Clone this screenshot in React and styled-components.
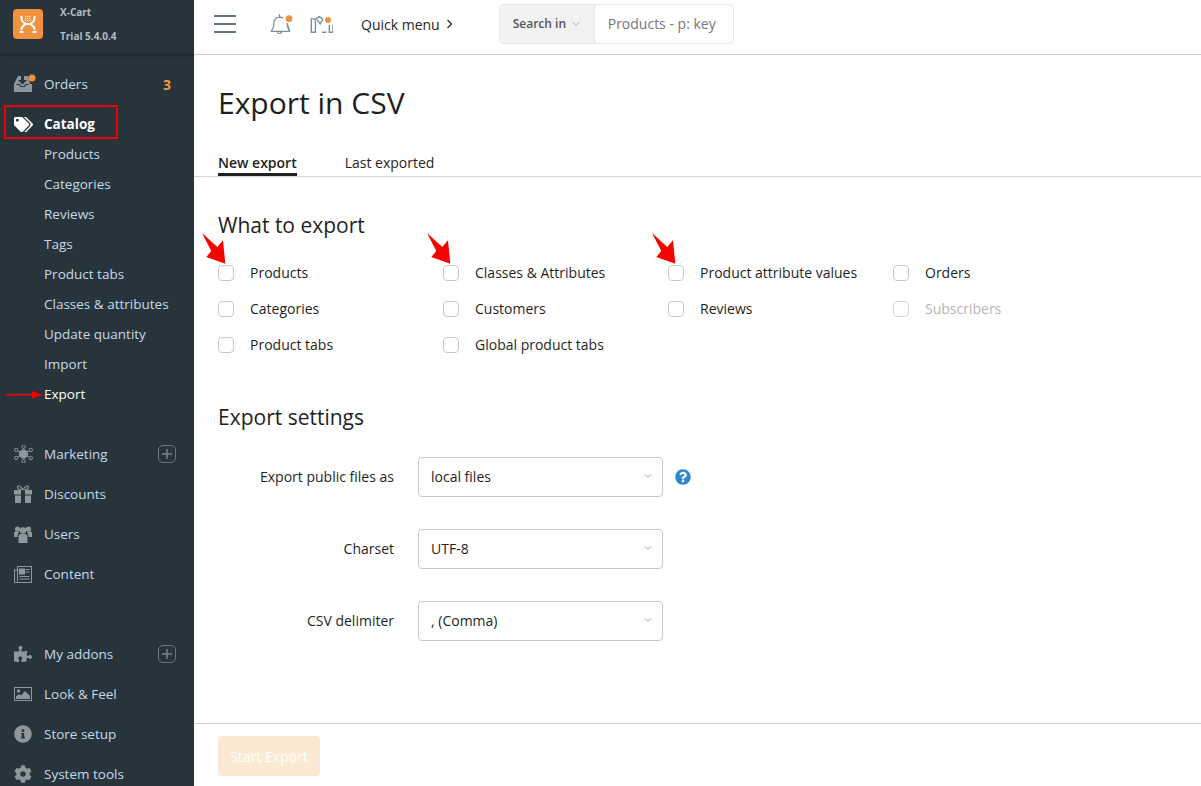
import React from 'react';
import styled, { createGlobalStyle } from 'styled-components';
import { FaTags, FaPuzzlePiece, FaInfoCircle, FaCog, FaQuestionCircle } from 'react-icons/fa';

const Global = createGlobalStyle`
  html, body { margin: 0; padding: 0; height: 100%; background: #fff; overflow: hidden; }
  body { font-family: "Open Sans", "Liberation Sans", sans-serif; font-size: 14px; color: #1f1f1f; }
  * { box-sizing: border-box; }
`;

const Page = styled.div`
  display: flex; width: 1201px; height: 786px; overflow: hidden;
`;
const Sidebar = styled.aside`
  width: 194px; flex: none; height: 786px; background: #28343b; overflow: hidden;
  display: flex; flex-direction: column; color: #c5d9ea; font-size: 13.5px;
`;
const Brand = styled.div`
  height: 54px; flex: none; display: flex; padding: 9px 0 0 13px; gap: 17px;
  box-shadow: 0 1px 3px rgba(0,0,0,.35); background: #28343b;
`;
const BrandText = styled.div`
  font-size: 10px; font-weight: 700; color: #b4bdc3; line-height: 24px; margin-top: -9px;
`;
const BrandLine = styled.div`
  height: 24px;
`;
const Nav = styled.nav`
  padding-top: 10px; display: flex; flex-direction: column;
`;
const Group = styled.div`
  display: flex; flex-direction: column; margin-bottom: ${p => p.$gap || 0}px;
`;
const SubGroup = styled.div`
  display: flex; flex-direction: column; margin-top: -5px; margin-bottom: 25px;
`;
const Item = styled.div`
  position: relative; display: flex; align-items: center; height: 40px; padding-left: 14px;
  color: ${p => p.$active ? '#fff' : '#c5d9ea'}; font-weight: ${p => p.$active ? 700 : 400};
`;
const IconSlot = styled.span`
  width: 30px; flex: none; display: flex; align-items: center; color: ${p => p.$active ? '#fff' : '#8d979d'};
`;
const Count = styled.span`
  position: absolute; left: 163px; color: #f0983a; font-weight: 700; font-size: 14px;
`;
const Plus = styled.span`
  position: absolute; left: 158px; top: 11px; width: 18px; height: 18px;
  border: 1px solid #6c777d; border-radius: 5px; color: #79848a;
  display: flex; align-items: center; justify-content: center;
`;
const RedBox = styled.span`
  position: absolute; left: 4px; top: 1px; width: 114px; height: 34px; border: 2px solid #ee0000;
`;
const SubItem = styled.div`
  position: relative; height: 30px; padding-left: 44px; display: flex; align-items: center;
  color: ${p => p.$active ? '#fff' : '#c5d9ea'};
`;
const NavArrow = styled.svg`
  position: absolute; left: 5px; top: 12px;
`;
const Main = styled.main`
  flex: 1; min-width: 0; display: flex; flex-direction: column; height: 786px;
`;
const Header = styled.header`
  height: 55px; flex: none; border-bottom: 1px solid #c9c9c9; display: flex; align-items: center; padding: 0 0 6px 20px;
`;
const Burger = styled.div`
  width: 22px; height: 18px; display: flex; flex-direction: column; justify-content: space-between; margin-right: 34px;
`;
const BurgerLine = styled.i`
  display: block; height: 2px; background: #5f7682;
`;
const HeadIcon = styled.span`
  display: flex; width: 24px; margin-right: ${p => p.$mr}px;
`;
const Quick = styled.div`
  display: flex; align-items: center; gap: 6px; color: #1f1f1f; margin-right: 46px;
`;
const Search = styled.div`
  display: flex; height: 40px; width: 235px; border: 1px solid #e8e8e8; border-radius: 4px; overflow: hidden;
`;
const SearchIn = styled.div`
  width: 95px; background: #f2f2f2; border-right: 1px solid #e6e6e6; display: flex; align-items: center;
  padding: 0 0 1px 13px; gap: 6px; font-size: 12px; font-weight: 600; color: #555;
`;
const SearchInput = styled.div`
  flex: 1; display: flex; align-items: center; padding: 0 0 2px 13px; color: #777; font-size: 14px;
`;
const Title = styled.h1`
  margin: 0; font-size: 30px; font-weight: 400; line-height: 44px; padding: 26px 0 0 24px; color: #1f1f1f;
`;
const Tabs = styled.div`
  display: flex; gap: 48px; padding: 28px 0 0 24px; height: 52px; border-bottom: 1px solid #d6d6d6;
`;
const Tab = styled.div`
  height: 23px; line-height: 20px; font-weight: ${p => p.$active ? 600 : 400}; color: #1f1f1f;
  border-bottom: ${p => p.$active ? '3px solid #1f1f1f' : '0'};
`;
const Section = styled.h2`
  margin: ${p => p.$top}px 0 0; font-size: 21px; font-weight: 400; line-height: 30px; color: #1f1f1f; padding-left: 24px;
`;
const Boxes = styled.div`
  display: grid; grid-template-columns: repeat(4, 225px); grid-auto-rows: 36px; padding: 15px 0 0 24px;
`;
const Check = styled.label`
  position: relative; display: flex; align-items: center; gap: 16px; color: ${p => p.$off ? '#b5b5b5' : '#1f1f1f'};
`;
const Box = styled.span`
  width: 16px; height: 16px; flex: none; border: 1px solid ${p => p.$off ? '#d8d8d8' : '#c8c8c8'}; border-radius: 4px; background: #fff;
`;
const CheckText = styled.span`
  margin-top: -2px;
`;
const BigArrow = styled.svg`
  position: absolute; left: -16px; top: -24px;
`;
const Form = styled.div`
  display: flex; flex-direction: column; gap: 32px; padding-top: 25px;
`;
const Row = styled.div`
  display: flex; align-items: center; height: 40px;
`;
const Label = styled.div`
  width: 200px; text-align: right; margin-right: 24px; color: #1f1f1f; padding-bottom: 2px;
`;
const Select = styled.div`
  width: 245px; height: 40px; border: 1px solid #c8c8c8; border-radius: 4px; display: flex; align-items: center;
  justify-content: space-between; padding: 0 10px 2px 12px; color: #1f1f1f;
`;
const Help = styled.span`
  display: flex; margin-left: 12px; color: #2b88cf;
`;
const Footer = styled.footer`
  margin-top: auto; height: 63px; flex: none; border-top: 1px solid #cfcfcf; padding: 12px 0 0 24px;
`;
const Button = styled.div`
  width: 102px; height: 40px; background: #fbead3; border-radius: 4px; color: #fff; display: flex;
  align-items: center; justify-content: center; font-size: 14px;
`;

const G = '#8d979d';
const D = '#28343b';

const Chevron = ({ c = '#a8a8a8' }) => (
  <svg width="8" height="6" viewBox="0 0 8 6" fill="none"><path d="M.8 1.200 4 4.400l3.200-3.200" stroke={c} strokeWidth="1" /></svg>
);
const PlusIcon = () => (
  <svg width="10" height="10" viewBox="0 0 10 10"><path d="M5 0v10M0 5h10" stroke="currentColor" strokeWidth="1.500" /></svg>
);
const Logo = () => (
  <svg width="30" height="30" viewBox="0 0 30 30">
    <rect width="30" height="30" rx="4" fill="#f0923f" />
    <path d="M8.500 7v3c0 2.500 2.500 3.500 4 5-1.500 1.500-4 2.500-4 5v1M6.500 23h4M21.500 7v3c0 2.500-2.500 3.500-4 5 1.500 1.500 4 2.500 4 5v1M19.500 23h4M12 15h6" stroke="#fff" strokeWidth="2" fill="none" />
    <path d="M12 7.500h6M12 9.500h6M12 11.500h6" stroke="#fff" strokeWidth="1.100" strokeDasharray="1.200 .9" />
  </svg>
);
const OrdersIcon = () => (
  <svg width="24" height="20" viewBox="0 0 24 20">
    <path d="M0 18v-8L4 2h10l2 8h2v8z" fill={G} />
    <path d="M7 2h3v4h3l-4.500 4.500L4 6h3z" fill={D} />
    <path d="M2.500 10.500h3l1 2h4l1-2h3" fill="none" stroke={D} strokeWidth="1.100" />
    <circle cx="18" cy="4" r="3.500" fill="#f0923f" />
  </svg>
);
const HubIcon = () => (
  <svg width="19" height="18" viewBox="0 0 19 18" fill="none" stroke={G}>
    <circle cx="9.500" cy="9" r="4.200" fill={G} />
    {[[2.200, 5], [2.200, 13], [16.800, 5], [16.800, 13], [9.500, 1.800], [9.500, 16.200]].map(([x, y]) => <circle key={x + '-' + y} cx={x} cy={y} r="1.700" />)}
    <path d="M4 6 7 7.500M4 12l3-1.500M15 6l-3 1.500M15 12l-3-1.500" />
  </svg>
);
const GiftIcon = () => (
  <svg width="18" height="18" viewBox="0 0 18 18">
    <path d="M9 5C7 1 4 0 3.500 2S6 5 9 5zm0 0c2-4 5-5 5.500-3S12 5 9 5z" fill="none" stroke={G} strokeWidth="1.200" />
    <path d="M0 5h18v4.500H0zM1 10.500h16V18H1z" fill={G} />
    <path d="M7 5h4v13H7z" fill={D} />
  </svg>
);
const UsersIcon = () => (
  <svg width="18" height="17" viewBox="0 0 18 17" fill={G}>
    <circle cx="3.500" cy="3" r="2.600" />
    <circle cx="14.500" cy="3" r="2.600" />
    <circle cx="9" cy="4.500" r="3.300" />
    <path d="M0 7c0-1 1-1.500 2-1.500h3C4.500 7 3.500 9 3.500 11H0zM18 7c0-1-1-1.500-2-1.500h-3c.5 1.500 1.500 3.500 1.500 5.500H18z" />
    <path d="M4.500 11c0-2 1-3 2-3h5c1 0 2 1 2 3v6h-9z" />
  </svg>
);
const NewsIcon = () => (
  <svg width="18" height="17" viewBox="0 0 18 17" fill="none" stroke={G}>
    <path d="M3.500.5h14v16H1.500a1 1 0 0 1-1-1V4h3M3.500.5v15" strokeWidth="1.100" />
    <path d="M5.500 3h5v5h-5zM11.500 3.500h4M11.500 6h4M5.500 10.500h10M5.500 13h10" fill={G} strokeWidth="1.200" />
  </svg>
);
const ImageIcon = () => (
  <svg width="18" height="14" viewBox="0 0 18 14">
    <rect x=".5" y=".5" width="17" height="13" fill="none" stroke={G} />
    <circle cx="4.500" cy="4" r="1.700" fill={G} />
    <path d="M2 12V9.500L5 7l2 1.500L11 4l5 5v3z" fill={G} />
  </svg>
);
const Bell = () => (
  <svg width="24" height="24" viewBox="0 0 24 24" fill="none" stroke="#77909c" strokeWidth="1.200">
    <path d="M1 19.300c2-2 2.800-3.800 2.800-7.300 0-3.500 2-6.500 6-6.800 1.500 0 2.500.3 3.500 1M17 11c0 4 1 6 2.800 8.300zM1 19.300h19" />
    <path d="M7.500 20c.4 2 3.700 2 4.200 0M9.500 2v3" />
    <circle cx="19" cy="6.700" r="3.400" fill="#f0923f" stroke="none" />
  </svg>
);
const Chart = () => (
  <svg width="26" height="24" viewBox="0 0 26 24" fill="none" stroke="#77909c" strokeWidth="1.500">
    <path d="M2.500 6.500h4.500V21H2.500zM7 7l4-3 4 2.500M9 7.500l3 4.500 3-5M14 21h5M22 13v8h4v-8" />
    <circle cx="20.600" cy="7.700" r="3.300" fill="#f0923f" stroke="none" />
  </svg>
);
const RedArrow = () => (
  <BigArrow width="28" height="36" viewBox="0 0 28 36">
    <path d="M0 2 15.300 16 21 9.300l2.300 23.400L4.300 26l5-6z" fill="#f80000" />
  </BigArrow>
);

const checks = [
  ['Products', 0, 1], ['Classes & Attributes', 0, 1], ['Product attribute values', 0, 1], ['Orders'],
  ['Categories'], ['Customers'], ['Reviews'], ['Subscribers', 1],
  ['Product tabs'], ['Global product tabs'],
];
const subs = ['Products', 'Categories', 'Reviews', 'Tags', 'Product tabs', 'Classes & attributes', 'Update quantity', 'Import'];

export default function App() {
  return (
    <Page>
      <Global />
      <Sidebar>
        <Brand>
          <Logo />
          <BrandText><BrandLine>X-Cart</BrandLine><BrandLine>Trial 5.4.0.4</BrandLine></BrandText>
        </Brand>
        <Nav>
          <Group>
            <Item><IconSlot><OrdersIcon /></IconSlot>Orders<Count>3</Count></Item>
            <Item $active><RedBox /><IconSlot $active><FaTags size={19} /></IconSlot>Catalog</Item>
          </Group>
          <SubGroup>
            {subs.map(s => <SubItem key={s}>{s}</SubItem>)}
            <SubItem $active>
              <NavArrow width="38" height="8" viewBox="0 0 38 8"><path d="M0 3.100h27V0l11 3.700-11 3.800V4.400H0z" fill="#f00000" /></NavArrow>
              Export
            </SubItem>
          </SubGroup>
          <Group $gap={40}>
            <Item><IconSlot><HubIcon /></IconSlot>Marketing<Plus><PlusIcon /></Plus></Item>
            <Item><IconSlot><GiftIcon /></IconSlot>Discounts</Item>
            <Item><IconSlot><UsersIcon /></IconSlot>Users</Item>
            <Item><IconSlot><NewsIcon /></IconSlot>Content</Item>
          </Group>
          <Group>
            <Item><IconSlot><FaPuzzlePiece size={18} /></IconSlot>My addons<Plus><PlusIcon /></Plus></Item>
            <Item><IconSlot><ImageIcon /></IconSlot>Look &amp; Feel</Item>
            <Item><IconSlot><FaInfoCircle size={18} /></IconSlot>Store setup</Item>
            <Item><IconSlot><FaCog size={18} /></IconSlot>System tools</Item>
          </Group>
        </Nav>
      </Sidebar>
      <Main>
        <Header>
          <Burger><BurgerLine /><BurgerLine /><BurgerLine /></Burger>
          <HeadIcon $mr={15}><Bell /></HeadIcon>
          <HeadIcon $mr={28}><Chart /></HeadIcon>
          <Quick>Quick menu <svg width="7" height="10" viewBox="0 0 7 10" fill="none"><path d="M1.500 1 5.500 5l-4 4" stroke="#222" strokeWidth="1.200" /></svg></Quick>
          <Search>
            <SearchIn>Search in <Chevron /></SearchIn>
            <SearchInput>Products - p: key</SearchInput>
          </Search>
        </Header>
        <Title>Export in CSV</Title>
        <Tabs>
          <Tab $active>New export</Tab>
          <Tab>Last exported</Tab>
        </Tabs>
        <Section $top={33}>What to export</Section>
        <Boxes>
          {checks.map(([t, off, arrow]) => (
            <Check key={t} $off={off}>{arrow ? <RedArrow /> : null}<Box $off={off} /><CheckText>{t}</CheckText></Check>
          ))}
        </Boxes>
        <Section $top={39}>Export settings</Section>
        <Form>
          <Row><Label>Export public files as</Label><Select>local files<Chevron /></Select><Help><FaQuestionCircle size={16} /></Help></Row>
          <Row><Label>Charset</Label><Select>UTF-8<Chevron /></Select></Row>
          <Row><Label>CSV delimiter</Label><Select>, (Comma)<Chevron /></Select></Row>
        </Form>
        <Footer><Button>Start Export</Button></Footer>
      </Main>
    </Page>
  );
}
